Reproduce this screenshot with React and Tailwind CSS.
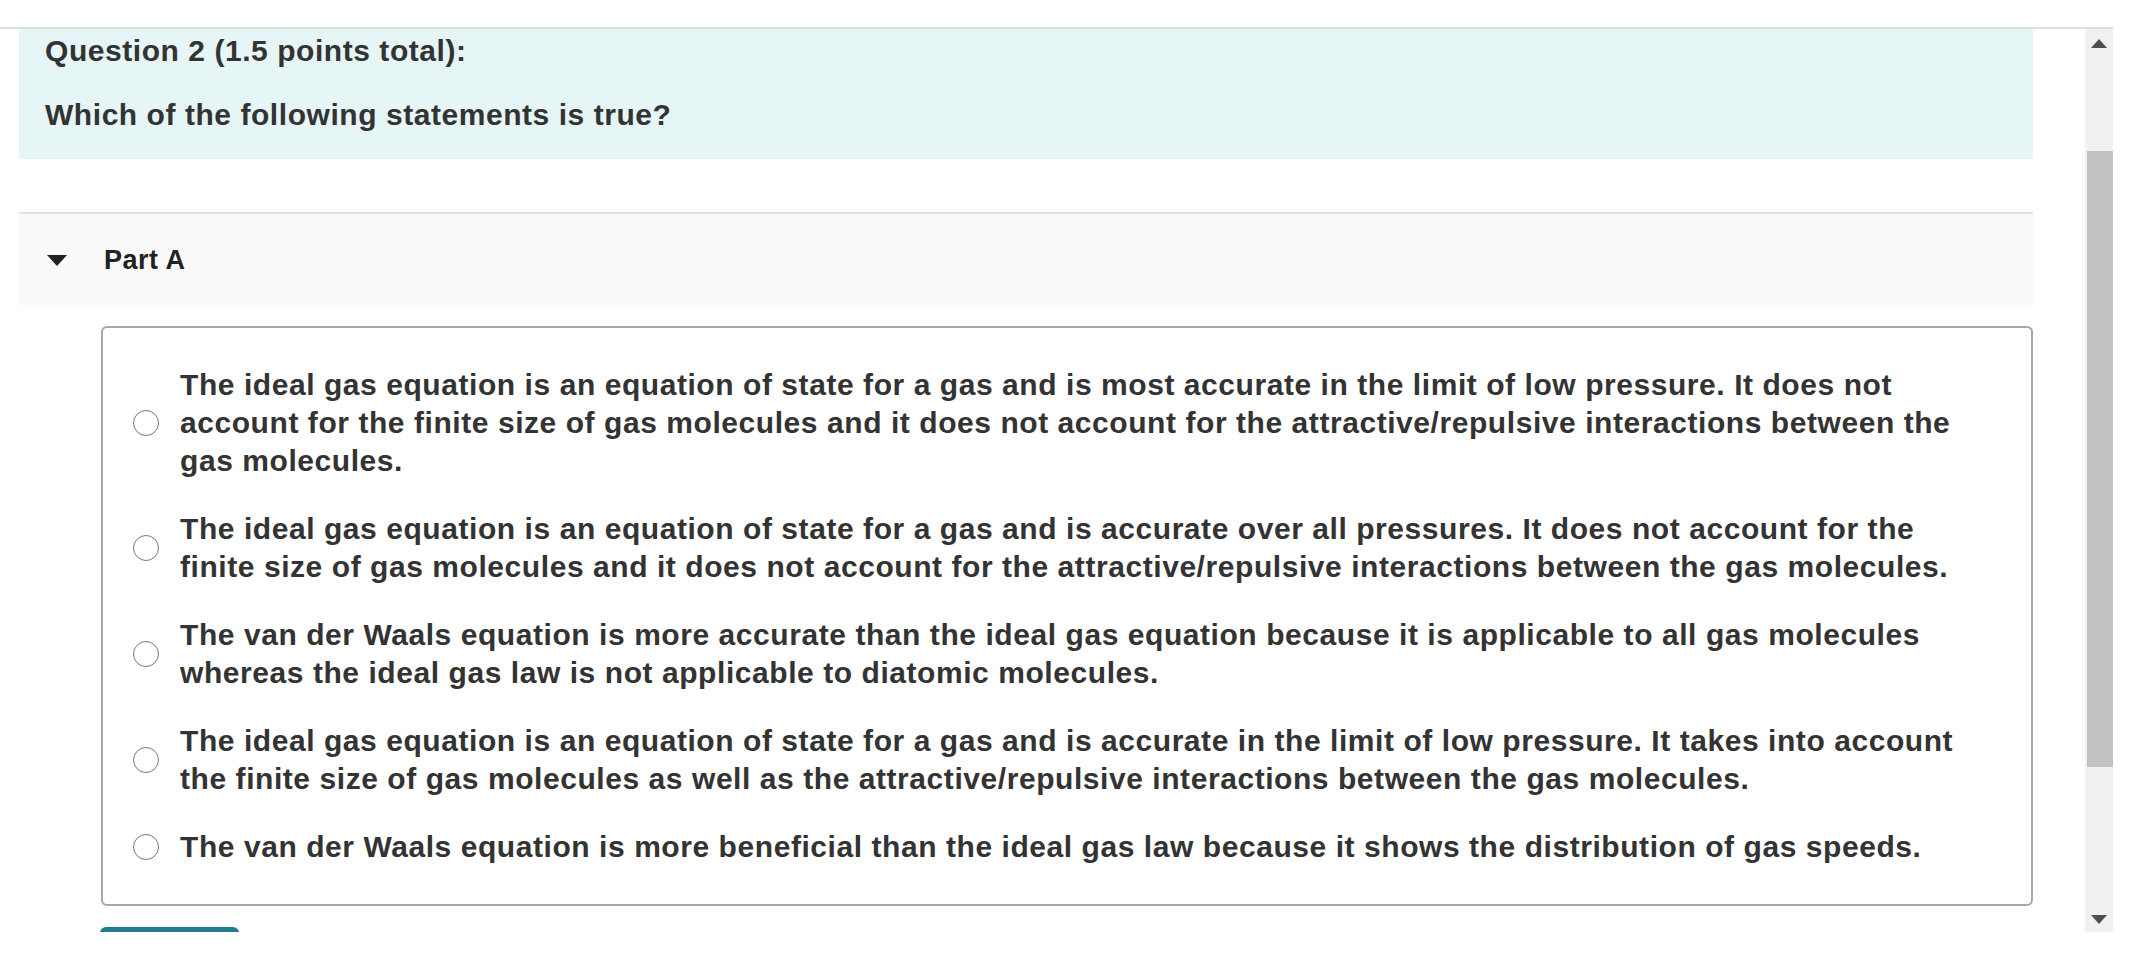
import React from "react";

const options = [
  "The ideal gas equation is an equation of state for a gas and is most accurate in the limit of low pressure. It does not account for the finite size of gas molecules and it does not account for the attractive/repulsive interactions between the gas molecules.",
  "The ideal gas equation is an equation of state for a gas and is accurate over all pressures. It does not account for the finite size of gas molecules and it does not account for the attractive/repulsive interactions between the gas molecules.",
  "The van der Waals equation is more accurate than the ideal gas equation because it is applicable to all gas molecules whereas the ideal gas law is not applicable to diatomic molecules.",
  "The ideal gas equation is an equation of state for a gas and is accurate in the limit of low pressure. It takes into account the finite size of gas molecules as well as the attractive/repulsive interactions between the gas molecules.",
  "The van der Waals equation is more beneficial than the ideal gas law because it shows the distribution of gas speeds.",
];

function Scrollbar() {
  return (
    <div className="w-[28px] h-full bg-[#f1f1f1] flex flex-col items-center">
      <div className="h-[28px] w-full flex items-center justify-center">
        <div className="w-0 h-0 border-l-[8px] border-r-[8px] border-b-[9px] border-l-transparent border-r-transparent border-b-[#505050]" />
      </div>
      <div className="w-[26px] ml-[2px] mt-[94px] h-[616px] bg-[#c1c1c1]" />
      <div className="flex-1" />
      <div className="h-[26px] w-full flex items-center justify-center">
        <div className="w-0 h-0 border-l-[8px] border-r-[8px] border-t-[9px] border-l-transparent border-r-transparent border-t-[#505050]" />
      </div>
    </div>
  );
}

export default function App() {
  return (
    <div
      className="w-[2142px] h-[970px] bg-white text-[#333]"
      style={{ fontFamily: '"Liberation Sans", Arial, sans-serif' }}
    >
      <div className="h-[27px]" />

      <div className="w-[2113px] h-[905px] border-t-2 border-[#dcdfe2] flex">

        {/* scrolled content */}
        <div className="w-[2085px] h-full overflow-hidden pl-[19px] pr-[52px]">

          {/* QUESTION */}
          <div className="bg-[#e6f5f6] h-[130px] pl-[26px] pt-[3px] font-bold text-[30px] leading-[38px] tracking-[0.55px]">
            <p>Question 2 (1.5 points total):</p>
            <p className="mt-[26px]">Which of the following statements is true?</p>
          </div>

          {/* PART A HEADER */}
          <div className="mt-[53px] border-t-2 border-[#e2e2e2] bg-[#f9f9f9] h-[93px] pt-[2px] flex items-center">
            <div className="ml-[28px] w-0 h-0 border-l-[10px] border-r-[10px] border-t-[11px] border-l-transparent border-r-transparent border-t-[#222]" />
            <span className="ml-[37px] text-[27px] font-bold text-[#222] tracking-[0.5px]">Part A</span>
          </div>

          {/* OPTIONS */}
          <div className="mt-[21px] ml-[82px] border-2 border-[#a6a6a6] rounded-md pl-[30px] pr-[56px] pt-[38px] pb-[38px] flex flex-col gap-[30px]">
            {options.map((text, i) => (
              <label key={i} className="flex items-center gap-[21px]">
                <span className="w-[26px] h-[26px] shrink-0 rounded-full border border-[#767676] bg-white" />
                <span className="text-[30px] leading-[38px] font-bold tracking-[0.56px]">{text}</span>
              </label>
            ))}
          </div>

          {/* SUBMIT BUTTON TOP */}
          <div className="mt-[21px] ml-[81px] w-[139px] h-[40px] bg-[#217a8e] rounded-t-md" />

        </div>

        <Scrollbar />

      </div>
    </div>
  );
}
